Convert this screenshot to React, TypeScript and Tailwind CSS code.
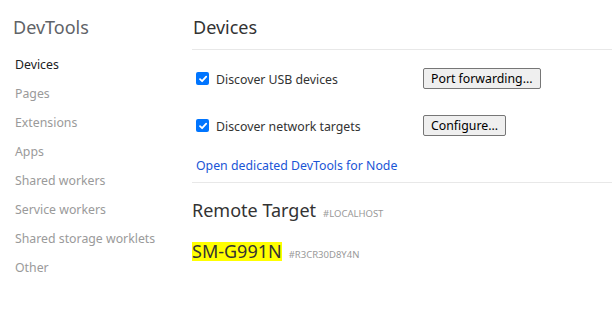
import React from "react";

const font = { fontFamily: '"Segoe UI", "Noto Sans", "Open Sans", sans-serif' };

function Check() {
  return (
    <span className="inline-flex h-[13px] w-[13px] items-center justify-center rounded-[2px] bg-[#0075ff]">
      <svg width="10" height="10" viewBox="0 0 10 10">
        <path d="M2 5.2 L4.1 7.2 L8.2 2.6" fill="none" stroke="white" strokeWidth="1.8" strokeLinecap="round" strokeLinejoin="round" />
      </svg>
    </span>
  );
}

function Btn({ children }: { children: React.ReactNode }) {
  return (
    <button className="h-[21px] rounded-[2px] border border-[#767676] bg-[#efefef] px-[7px] pt-[1px] text-[12.3px] leading-[18px] text-black">
      {children}
    </button>
  );
}

export default function App() {
  const items = ["Devices", "Pages", "Extensions", "Apps", "Shared workers", "Service workers", "Shared storage worklets", "Other"];
  return (
    <div className="flex h-[309px] w-[612px] bg-white" style={font}>
      <div className="w-[180px] shrink-0">
        <div className="pl-[13px] pt-[14px] text-[18px] leading-[26px] text-[#5f6368]">DevTools</div>
        <div className="mt-[16px] flex flex-col">
          {items.map((t, i) => (
            <div key={t} className={`h-[29px] pl-[15px] text-[12.3px] leading-[18px] ${i === 0 ? "text-[#202124]" : "text-[#9a9a9a]"}`}>
              {t}
            </div>
          ))}
        </div>
      </div>
      <div className="flex-1 pl-[12px]">
        <div className="h-[50px] border-b border-[#e8e8e8] pl-[1px] pt-[14px] text-[18px] leading-[26px] text-[#333]">Devices</div>
        <div className="mt-[18px] flex h-[21px] items-center">
          <div className="flex w-[231px] items-center pl-[4px]">
            <Check />
            <span className="ml-[7px] pt-[3px] text-[12.3px] leading-[18px] text-[#333]">Discover USB devices</span>
          </div>
          <Btn>Port forwarding...</Btn>
        </div>
        <div className="mt-[26px] flex h-[21px] items-center">
          <div className="flex w-[231px] items-center pl-[4px]">
            <Check />
            <span className="ml-[7px] pt-[3px] text-[12.3px] leading-[18px] text-[#333]">Discover network targets</span>
          </div>
          <Btn>Configure...</Btn>
        </div>
        <div className="mt-[21px] h-[26px] border-b border-[#e8e8e8] pl-[4px] text-[12.3px] leading-[18px] text-[#1a55d6]">
          Open dedicated DevTools for Node
        </div>
        <div className="mt-[14px] flex items-baseline">
          <span className="text-[18px] leading-[26px] text-[#333]">Remote Target</span>
          <span className="ml-[7px] text-[9.5px] uppercase text-[#999]">#LOCALHOST</span>
        </div>
        <div className="mt-[19px] flex items-baseline">
          <span className="bg-[#ffff00] text-[18px] leading-[19px] text-[#333]">SM-G991N</span>
          <span className="ml-[7px] text-[9.5px] text-[#999]">#R3CR30D8Y4N</span>
        </div>
      </div>
    </div>
  );
}
